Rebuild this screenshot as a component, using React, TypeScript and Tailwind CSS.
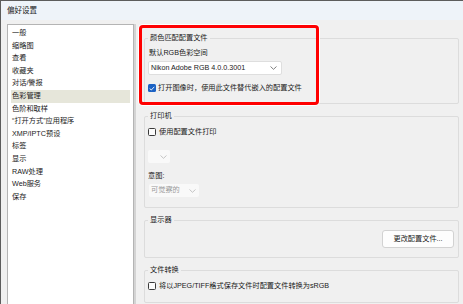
import React from 'react';

const categories = [
  '一般',
  '缩略图',
  '查看',
  '收藏夹',
  '对话/警报',
  '色彩管理',
  '色阶和取样',
  '“打开方式”应用程序',
  'XMP/IPTC预设',
  '标签',
  '显示',
  'RAW处理',
  'Web服务',
  '保存',
];

function Chevron({ color = '#606060' }: { color?: string }) {
  return (
    <svg width="7" height="4" viewBox="0 0 7 4" fill="none">
      <path d="M0.5 0.5 L3.5 3.3 L6.5 0.5" stroke={color} strokeWidth="0.8" />
    </svg>
  );
}

function Checkbox({ checked }: { checked?: boolean }) {
  if (checked) {
    return (
      <div className="w-[8px] h-[8px] rounded-[1.5px] bg-[#1c62c4] flex items-center justify-center shrink-0">
        <svg width="6" height="5" viewBox="0 0 6 5" fill="none">
          <path d="M0.7 2.6 L2.3 4 L5.3 0.8" stroke="#fff" strokeWidth="0.9" />
        </svg>
      </div>
    );
  }
  return <div className="w-[8px] h-[8px] rounded-[1.5px] border border-[#3a3a3a] bg-[#fbfbfb] shrink-0" />;
}

function Group({ title, className, children }: { title: string; className: string; children?: React.ReactNode }) {
  return (
    <div className={`border border-[#dcdcdc] rounded-[2px] px-[3px] flex flex-col ${className}`}>
      <div className="-mt-[6px] h-[10px] leading-[10px] w-fit bg-[#f0f0f0] px-[2px]">{title}</div>
      {children}
    </div>
  );
}

export default function App() {
  return (
    <div
      className="relative w-[463px] h-[304px] overflow-hidden bg-[#f0f0f0] border-l border-t border-[#5c5c5c] text-[7.2px] text-[#1a1a1a]"
      style={{ fontFamily: '"Liberation Sans", "Noto Sans CJK SC", sans-serif' }}
    >
      {/* Title bar */}
      <div className="h-[19px] bg-[#eef3f9] flex items-center pl-[6px] text-[7.5px]">偏好设置</div>

      <div className="flex pl-[6px] pt-[4px]">
        {/* Category list */}
        <div className="w-[127px] h-[300px] bg-white border border-[#b4b4b4] pt-[2px] shrink-0">
          {categories.map((c) => (
            <div
              key={c}
              className={`mx-[3px] h-[12.6px] leading-[12.6px] pl-[1px] whitespace-nowrap ${
                c === '色彩管理' ? 'bg-[#e6e6da]' : ''
              }`}
            >
              {c}
            </div>
          ))}
        </div>
        <div className="w-[2px] h-[300px] bg-[#d4d4d4]" />

        {/* Settings */}
        <div className="ml-[8px] mt-[14px] w-[315px] flex flex-col gap-[12px]">
          <Group title="颜色匹配配置文件" className="h-[66px]">
            <div className="mt-[5px] h-[10px] leading-[10px] pl-[1px]">默认RGB色彩空间</div>
            <div className="mt-[3px] w-[134px] h-[14px] bg-white border border-[#dedede] rounded-[2px] flex items-center justify-between pl-[2px] pr-[4px]">
              <span>Nikon Adobe RGB 4.0.0.3001</span>
              <Chevron />
            </div>
            <div className="mt-[8px] h-[10px] flex items-center gap-[2px]">
              <Checkbox checked />
              <span>打开图像时，使用此文件替代嵌入的配置文件</span>
            </div>
          </Group>

          <Group title="打印机" className="h-[92px]">
            <div className="mt-[6px] h-[10px] flex items-center gap-[3px]">
              <Checkbox />
              <span>使用配置文件打印</span>
            </div>
            <div className="mt-[13px] w-[22px] h-[13px] bg-[#f9f9f9] rounded-[2px] flex items-center justify-end pr-[3px]">
              <Chevron color="#b8b8b8" />
            </div>
            <div className="mt-[8px] h-[10px] leading-[10px]">意图:</div>
            <div className="mt-[3px] ml-[1px] w-[50px] h-[13px] bg-[#f9f9f9] rounded-[2px] flex items-center justify-between pl-[2px] pr-[3px] text-[#9a9a9a]">
              <span>可觉察的</span>
              <Chevron color="#b8b8b8" />
            </div>
          </Group>

          <Group title="显示器" className="h-[38px]">
            <div className="mt-[5px] flex justify-end pr-[1px]">
              <div className="w-[72px] h-[18px] bg-[#fdfdfd] border border-[#d2d2d2] rounded-[3px] flex items-center justify-center">
                更改配置文件...
              </div>
            </div>
          </Group>

          <Group title="文件转换" className="h-[33px]">
            <div className="mt-[6px] h-[10px] flex items-center gap-[3px]">
              <Checkbox />
              <span>将以JPEG/TIFF格式保存文件时配置文件转换为sRGB</span>
            </div>
          </Group>
        </div>
      </div>

      {/* Red highlight annotation */}
      <div className="absolute left-[138px] top-[24px] w-[180px] h-[80px] border-[3px] border-[#ff0000] rounded-[4px] shadow-[0_0_0_1px_#ffffff]" />
    </div>
  );
}
